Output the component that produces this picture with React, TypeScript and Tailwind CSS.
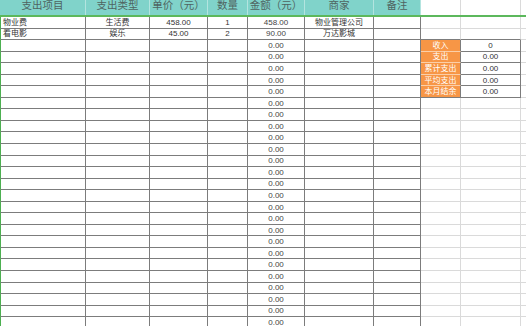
import React from "react";

type Row = {
  item?: string;
  kind?: string;
  price?: string;
  qty?: string;
  amount: string;
  shop?: string;
};

const rows: Row[] = [
  { item: "物业费", kind: "生活费", price: "458.00", qty: "1", amount: "458.00", shop: "物业管理公司" },
  { item: "看电影", kind: "娱乐", price: "45.00", qty: "2", amount: "90.00", shop: "万达影城" },
  ...Array.from({ length: 26 }, () => ({ amount: "0.00" })),
];

// summary block sits in rows 3-7, right of the table
const summary: Record<number, [string, string]> = {
  2: ["收入", "0"],
  3: ["支出", "0.00"],
  4: ["累计支出", "0.00"],
  5: ["平均支出", "0.00"],
  6: ["本月结余", "0.00"],
};

const headers = ["支出项目", "支出类型", "单价（元）", "数量", "金额（元）", "商家", "备注"];
const headerWidths = ["w-[86px]", "w-[64px]", "w-[58px]", "w-[40px]", "w-[57px]", "w-[69px]", "w-[47px]"];

const cell = "h-full shrink-0 flex items-center border-r border-b";
const dark = "border-[#7c7c7c]";
const light = "border-[#dadada]";

function DataRow({ row, index }: { row: Row; index: number }) {
  const sum = summary[index];
  const aboveSummary = index === 1;
  const lastSummary = index === 6;
  return (
    <div className="flex h-[11.56px] text-[8px] leading-[11px] text-[#333]">
      <div className={`${cell} ${dark} w-[86px] border-l border-l-[#4caf50] pl-[2px]`}>{row.item}</div>
      <div className={`${cell} ${dark} w-[64px] justify-center`}>{row.kind}</div>
      <div className={`${cell} ${dark} w-[58px] justify-center`}>{row.price}</div>
      <div className={`${cell} ${dark} w-[40px] justify-center`}>{row.qty}</div>
      <div className={`${cell} ${dark} w-[57px] justify-center text-[#444]`}>{row.amount}</div>
      <div className={`${cell} ${dark} w-[69px] justify-center`}>{row.shop}</div>
      <div className={`${cell} ${dark} w-[47px]`} />
      {sum ? (
        <>
          <div
            className={`${cell} w-[40px] justify-center bg-[#f79646] text-white border-r-[#7c7c7c] ${
              lastSummary ? "border-b-[#7c7c7c]" : "border-b-[#fbcfa8]"
            }`}
          >
            {sum[0]}
          </div>
          <div className={`${cell} ${dark} w-[60px] justify-center`}>{sum[1]}</div>
        </>
      ) : (
        <>
          <div className={`${cell} w-[40px] ${aboveSummary ? "border-r-[#dadada] border-b-[#7c7c7c]" : light}`} />
          <div className={`${cell} w-[60px] ${aboveSummary ? "border-r-[#dadada] border-b-[#7c7c7c]" : light}`} />
        </>
      )}
      <div className={`${cell} ${light} w-[60px]`} />
    </div>
  );
}

export default function App() {
  return (
    <div className="w-[526px] h-[326px] overflow-hidden bg-white font-['Liberation_Sans','Noto_Sans_CJK_SC',sans-serif]">
      <div className="flex h-[17px] border-b-2 border-[#5cb85c] overflow-hidden">
        {headers.map((h, i) => (
          <div
            key={h}
            className={`${headerWidths[i]} h-full shrink-0 flex justify-center items-start overflow-hidden bg-[#80d3ca] border-r border-[#b3e4df] text-[10.5px] leading-[11px] text-[#4f6461]`}
          >
            <span>{h}</span>
          </div>
        ))}
        <div className="w-[40px] h-full shrink-0 border-r border-[#dadada]" />
        <div className="w-[60px] h-full shrink-0 border-r border-[#dadada]" />
        <div className="w-[60px] h-full shrink-0 border-r border-[#dadada]" />
      </div>
      {rows.map((r, i) => (
        <DataRow key={i} row={r} index={i} />
      ))}
    </div>
  );
}
